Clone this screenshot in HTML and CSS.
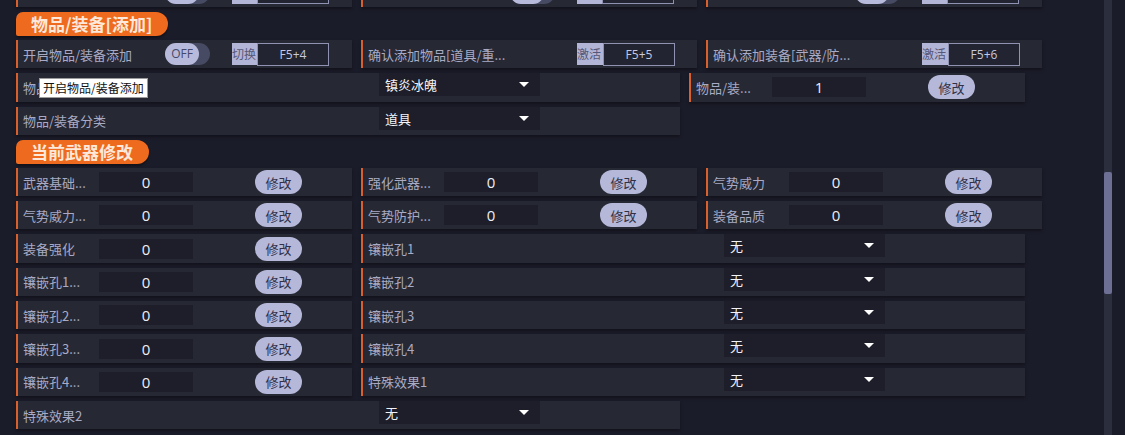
FILE: index.html
```html
<!DOCTYPE html>
<html lang="zh-CN">
<head>
    <meta charset="UTF-8">
    <title>物品/装备</title>
    <link rel="stylesheet" href="styles.css">
</head>
<body>
    <div class="content">
        <!-- previous row, scrolled mostly out of view -->
        <div class="grid top-cut">
            <div class="cell">
                <span class="label wide-label"></span>
                <div class="toggle"><span class="knob"></span></div>
                <span class="key-tag"></span><span class="key-box"></span>
            </div>
            <div class="cell">
                <span class="label wide-label"></span>
                <div class="toggle"><span class="knob"></span></div>
                <span class="key-tag"></span><span class="key-box"></span>
            </div>
            <div class="cell">
                <span class="label wide-label"></span>
                <div class="toggle"><span class="knob"></span></div>
                <span class="key-tag"></span><span class="key-box"></span>
            </div>
        </div>

        <div class="section-title">物品/装备[添加]</div>
        <div class="grid">
            <div class="cell">
                <span class="label wide-label">开启物品/装备添加</span>
                <div class="toggle"><span class="knob">OFF</span></div>
                <span class="key-tag">切换</span><span class="key-box">F5+4</span>
            </div>
            <div class="cell">
                <span class="label long-label">确认添加物品[道具/重...</span>
                <span class="key-tag">激活</span><span class="key-box">F5+5</span>
            </div>
            <div class="cell">
                <span class="label long-label">确认添加装备[武器/防...</span>
                <span class="key-tag">激活</span><span class="key-box">F5+6</span>
            </div>

            <div class="cell cell-wide">
                <span class="label select-label">物品/装备选择</span>
                <div class="select">镇炎冰魄<span class="arrow"></span></div>
                <div class="tooltip">开启物品/装备添加</div>
            </div>
            <div class="cell">
                <span class="label">物品/装...</span>
                <span class="value">1</span>
                <button class="btn">修改</button>
            </div>

            <div class="cell cell-wide">
                <span class="label select-label">物品/装备分类</span>
                <div class="select">道具<span class="arrow"></span></div>
            </div>
        </div>

        <div class="section-title">当前武器修改</div>
        <div class="grid">
            <div class="cell">
                <span class="label">武器基础...</span>
                <span class="value">0</span>
                <button class="btn">修改</button>
            </div>
            <div class="cell">
                <span class="label">强化武器...</span>
                <span class="value">0</span>
                <button class="btn">修改</button>
            </div>
            <div class="cell">
                <span class="label">气势威力</span>
                <span class="value">0</span>
                <button class="btn">修改</button>
            </div>

            <div class="cell">
                <span class="label">气势威力...</span>
                <span class="value">0</span>
                <button class="btn">修改</button>
            </div>
            <div class="cell">
                <span class="label">气势防护...</span>
                <span class="value">0</span>
                <button class="btn">修改</button>
            </div>
            <div class="cell">
                <span class="label">装备品质</span>
                <span class="value">0</span>
                <button class="btn">修改</button>
            </div>

            <div class="cell">
                <span class="label">装备强化</span>
                <span class="value">0</span>
                <button class="btn">修改</button>
            </div>
            <div class="cell cell-wide">
                <span class="label select-label">镶嵌孔1</span>
                <div class="select">无<span class="arrow"></span></div>
            </div>

            <div class="cell">
                <span class="label">镶嵌孔1...</span>
                <span class="value">0</span>
                <button class="btn">修改</button>
            </div>
            <div class="cell cell-wide">
                <span class="label select-label">镶嵌孔2</span>
                <div class="select">无<span class="arrow"></span></div>
            </div>

            <div class="cell">
                <span class="label">镶嵌孔2...</span>
                <span class="value">0</span>
                <button class="btn">修改</button>
            </div>
            <div class="cell cell-wide">
                <span class="label select-label">镶嵌孔3</span>
                <div class="select">无<span class="arrow"></span></div>
            </div>

            <div class="cell">
                <span class="label">镶嵌孔3...</span>
                <span class="value">0</span>
                <button class="btn">修改</button>
            </div>
            <div class="cell cell-wide">
                <span class="label select-label">镶嵌孔4</span>
                <div class="select">无<span class="arrow"></span></div>
            </div>

            <div class="cell">
                <span class="label">镶嵌孔4...</span>
                <span class="value">0</span>
                <button class="btn">修改</button>
            </div>
            <div class="cell cell-wide">
                <span class="label select-label">特殊效果1</span>
                <div class="select">无<span class="arrow"></span></div>
            </div>

            <div class="cell cell-wide">
                <span class="label select-label">特殊效果2</span>
                <div class="select">无<span class="arrow"></span></div>
            </div>
        </div>
    </div>

    <div class="scrollbar"><div class="thumb"></div></div>
</body>
</html>
```

FILE: styles.css
```css
body {
    margin: 0;
    padding: 0;
    height: 435px;
    overflow: hidden;
    display: flex;
    background-color: #1b1c29;
    font-family: "Noto Sans CJK SC", "Noto Sans", sans-serif;
    color: #a9abc4;
}
.content {
    flex: 1;
    padding-left: 16px;
}
.grid {
    width: 1030px;
    display: flex;
    flex-wrap: wrap;
    column-gap: 9px;
    row-gap: 5px;
}
.top-cut {
    margin-top: -21.3px;
}
.section-title {
    display: block;
    width: max-content;
    margin: 5px 0 4px;
    height: 24px;
    line-height: 24px;
    padding: 0 16px 0 15px;
    background-color: #ee6a1e;
    border-radius: 7px 12px 12px 2px;
    color: #fde8da;
    font-size: 17px;
    font-weight: bold;
    box-shadow: 0 2px 2px rgba(0, 0, 0, 0.35);
}
.cell {
    position: relative;
    box-sizing: border-box;
    width: 336px;
    height: 28.3px;
    display: flex;
    align-items: center;
    padding-left: 5px;
    background-color: #262834;
    border-left: 2px solid #d8602c;
    box-shadow: 0 2px 3px rgba(0, 0, 0, 0.35);
    font-size: 13px;
}
.cell-wide {
    width: 664px;
}
.label {
    width: 76px;
    white-space: nowrap;
    overflow: hidden;
}
.wide-label {
    width: 142px;
}
.long-label {
    width: 209px;
}
.select-label {
    width: 356px;
}
.value {
    box-sizing: border-box;
    width: 94px;
    height: 20px;
    line-height: 20px;
    text-align: center;
    background-color: #1d1e2a;
    color: #eceef6;
    font-family: "Open Sans", sans-serif;
    font-size: 15px;
}
.btn {
    margin-left: 62px;
    width: 47px;
    height: 24px;
    padding: 0;
    border: none;
    border-radius: 12px;
    background-color: #b6b8da;
    color: #2f3148;
    font-family: "Noto Sans CJK SC", sans-serif;
    font-size: 13px;
}
.toggle {
    width: 45px;
    height: 22px;
    border-radius: 11px;
    background-color: #474a63;
}
.knob {
    display: block;
    width: 34px;
    height: 22px;
    line-height: 22px;
    border-radius: 11px;
    background-color: #b8badc;
    color: #454868;
    text-align: center;
    font-family: "Open Sans", sans-serif;
    font-size: 12px;
}
.key-tag {
    margin-left: 22px;
    width: 25px;
    height: 22px;
    line-height: 22px;
    background-color: #b3b5d6;
    color: #555878;
    font-size: 12px;
}
.long-label + .key-tag {
    margin-left: 0;
    width: 26px;
}
.key-box {
    box-sizing: border-box;
    width: 72px;
    height: 23px;
    line-height: 21px;
    border: 1px solid #9092b2;
    background-color: #222432;
    color: #c6c8de;
    text-align: center;
    font-family: "Open Sans", sans-serif;
    font-size: 12px;
}
.select {
    position: relative;
    align-self: flex-start;
    box-sizing: border-box;
    width: 161px;
    height: 23px;
    line-height: 23px;
    padding-left: 6px;
    background-color: #1d1e2a;
    color: #f2f3f8;
    font-size: 13px;
}
.arrow {
    position: absolute;
    right: 11px;
    top: 9px;
    width: 0;
    height: 0;
    border-left: 5px solid transparent;
    border-right: 5px solid transparent;
    border-top: 5px solid #ffffff;
}
.tooltip {
    position: absolute;
    left: 21px;
    top: 5px;
    padding: 0 3px;
    height: 18px;
    line-height: 18px;
    background-color: #ffffff;
    border: 1px solid #9a9a9a;
    color: #111111;
    font-size: 12px;
}
.scrollbar {
    width: 8px;
    margin-right: 13px;
    background-color: #2b2e3d;
}
.thumb {
    margin-top: 172px;
    height: 122px;
    border-radius: 2px;
    background-color: #6d7094;
}
```
